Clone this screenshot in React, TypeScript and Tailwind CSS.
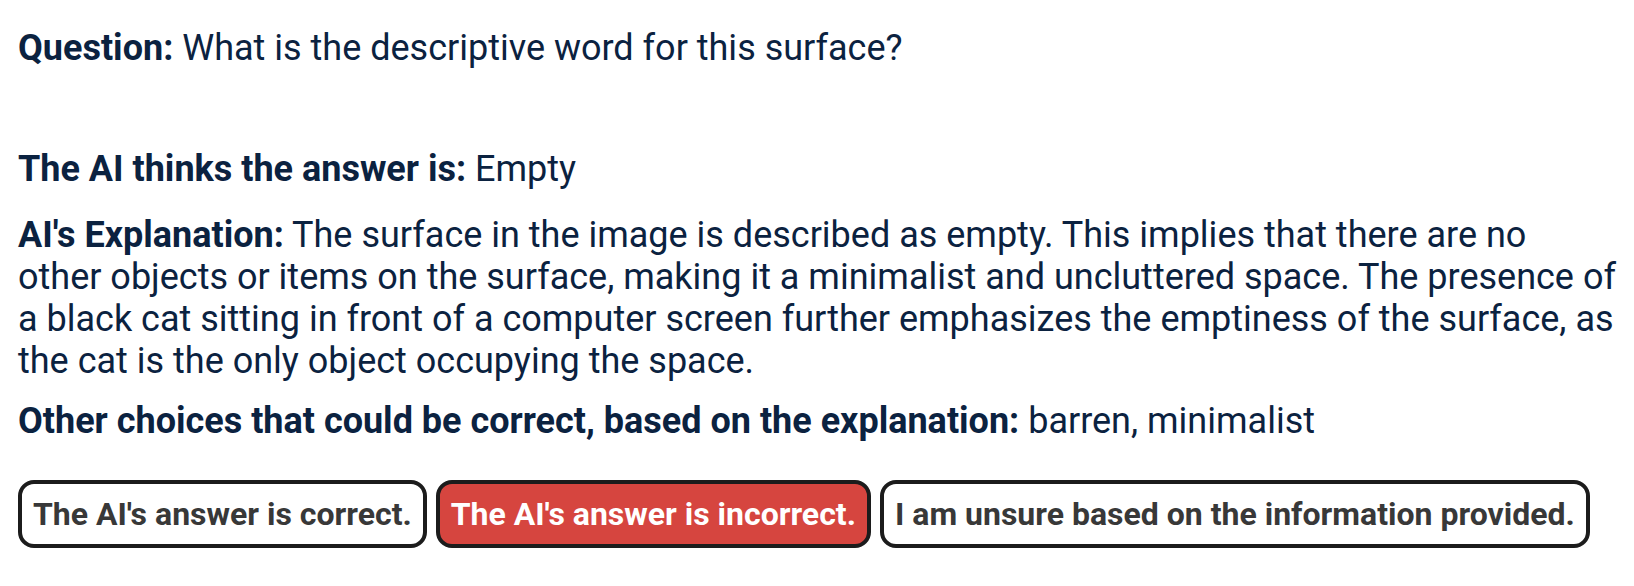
import React from 'react'

const TEXT = 'text-[#0b2240]'

function Field({ label, children, className = '' }: { label: string; children: React.ReactNode; className?: string }) {
  return (
    <p className={`${className}`}>
      <span className="font-bold">{label}</span> {children}
    </p>
  )
}

const CHOICES = [
  { label: "The AI's answer is correct.", active: false },
  { label: "The AI's answer is incorrect.", active: true },
  { label: 'I am unsure based on the information provided.', active: false },
]

export default function App() {
  return (
    <div
      className={`min-h-screen bg-white px-[18px] pt-[27px] text-[36px] leading-[42px] ${TEXT}`}
      style={{ fontFamily: 'Roboto, "Liberation Sans", sans-serif' }}
    >
      <Field label="Question:">What is the descriptive word for this surface?</Field>

      <Field label="The AI thinks the answer is:" className="mt-[79px]">
        Empty
      </Field>

      <Field label="AI's Explanation:" className="mt-[24px]">
        The surface in the image is described as empty. This implies that there are no other objects or items on the
        surface, making it a minimalist and uncluttered space. The presence of a black cat sitting in front of a
        computer screen further emphasizes the emptiness of the surface, as the cat is the only object occupying the
        space.
      </Field>

      <Field label="Other choices that could be correct, based on the explanation:" className="mt-[18px]">
        barren, minimalist
      </Field>

      <div className="mt-[38px] flex gap-[9px]">
        {CHOICES.map((c) => (
          <button
            key={c.label}
            className={[
              'h-[68px] rounded-[16px] border-[4px] border-[#1c1c1c] px-[11px] text-[32px] leading-none font-bold',
              c.active ? 'bg-[#d6453f] text-white' : 'bg-white text-[#383838]',
            ].join(' ')}
          >
            {c.label}
          </button>
        ))}
      </div>
    </div>
  )
}
